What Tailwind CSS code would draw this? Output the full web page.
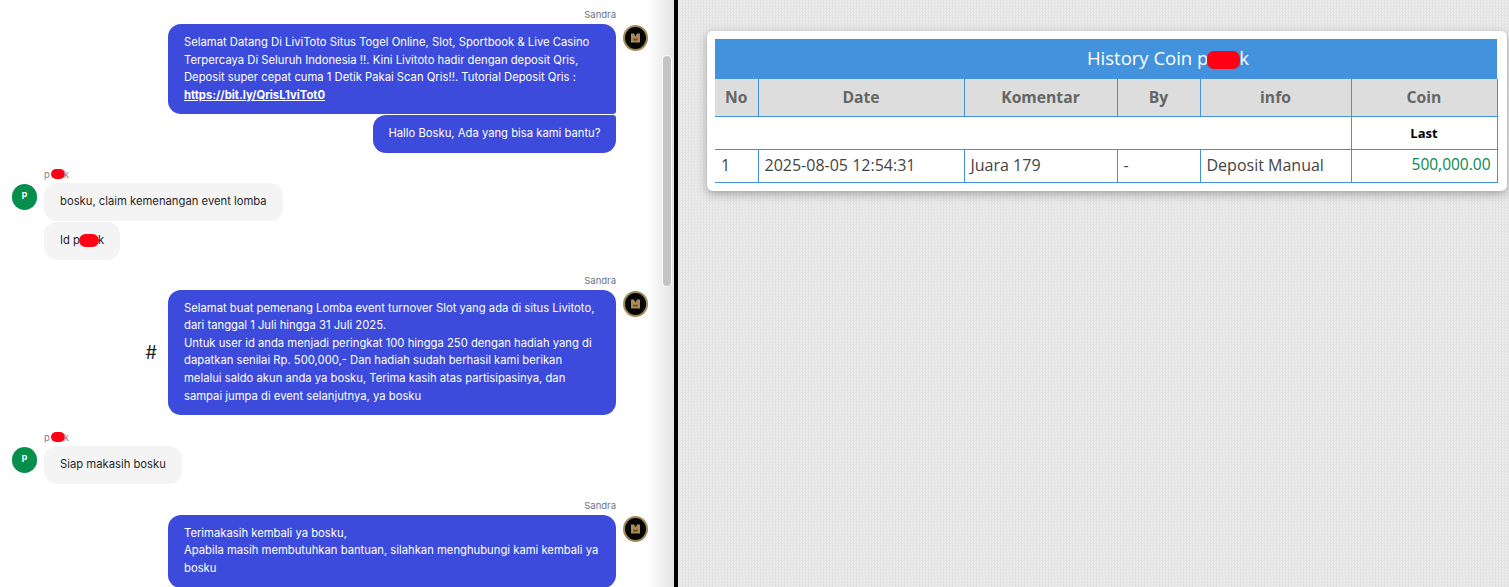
<!DOCTYPE html>
<html lang="id">
<head>
    <meta charset="UTF-8">
    <script src="https://cdn.jsdelivr.net/npm/@tailwindcss/browser@4"></script>
    <title>History Coin</title>
</head>
<body class="overflow-hidden">
    <div class="flex h-[587px] w-[1509px] overflow-hidden">
        <!-- chat -->
        <div class="relative h-full w-[674px] shrink-0 overflow-hidden bg-white font-['Inter',sans-serif] text-[11.25px] leading-[17.6px]">
            <div class="absolute inset-y-0 right-0 w-[26px] bg-gradient-to-r from-white to-[#e2e2e2]"></div>
            <div class="absolute right-[3px] top-[56px] h-[230px] w-[8px] rounded-full bg-[#c4c4c4] ring-1 ring-white/70"></div>

            <div class="relative flex flex-col pt-[10px] pl-[12px] pr-[26px]">
                <!-- agent -->
                <div class="flex flex-col">
                    <div class="pr-[32px] text-right text-[9.5px] leading-[10px] text-[#6b7280]">Sandra</div>
                    <div class="mt-[4px] flex items-start justify-end gap-[7px]">
                        <div class="flex flex-col items-end gap-px">
                            <div class="w-[448px] rounded-[13px] rounded-br-[3px] bg-[#3c4bdb] px-[16px] py-[10px] text-white">
                                Selamat Datang Di LiviToto Situs Togel Online, Slot, Sportbook &amp; Live Casino Terpercaya Di Seluruh Indonesia !!. Kini Livitoto hadir dengan deposit Qris, Deposit super cepat cuma 1 Detik Pakai Scan Qris!!. Tutorial Deposit Qris : <a class="font-bold underline">https://bit.ly/QrisL1viTot0</a>
                            </div>
                            <div class="rounded-[13px] rounded-tr-[3px] bg-[#3c4bdb] px-[15.5px] py-[10px] text-white">Hallo Bosku, Ada yang bisa kami bantu?</div>
                        </div>
                        <svg class="mt-px h-[26px] w-[25px] shrink-0" viewBox="0 0 25 26">
                            <ellipse cx="12.5" cy="13" rx="11.5" ry="12" fill="#050505" stroke="#a08a55" stroke-width="2"/>
                            <path d="M8 8.500h3l1.500 3 1.500-3h3v9h-9z" fill="#a98a58"/>
                            <path d="M10.500 13l2 1.500 2-1.500v2.500h-4z" fill="#5a4520"/>
                        </svg>
                    </div>
                </div>

                <!-- user -->
                <div class="mt-[16px] flex flex-col">
                    <div class="pl-[32px] text-[9.5px] leading-[10px] text-[#7b8087]">p<span class="mr-[-1px] ml-px inline-block h-[10px] w-[14px] rounded-full bg-[#ff0014] align-[-1px]"></span>k</div>
                    <div class="mt-[3px] flex items-start gap-[7px]">
                        <div class="mt-px flex h-[26px] w-[25px] shrink-0 items-center justify-center rounded-full bg-[#068f4c] text-[8.5px] font-bold text-white">P</div>
                        <div class="flex flex-col items-start gap-[1.5px]">
                            <div class="rounded-[13px] bg-[#f4f4f5] px-[16px] py-[10px] text-[#27272a]">bosku, claim kemenangan event lomba</div>
                            <div class="rounded-[13px] bg-[#f4f4f5] px-[16px] py-[10px] text-[#27272a]">Id p<span class="mx-[-1px] inline-block h-[13px] w-[20px] rounded-full bg-[#ff0014] align-[-3px]"></span>k</div>
                        </div>
                    </div>
                </div>

                <!-- agent -->
                <div class="mt-[16px] flex flex-col">
                    <div class="pr-[32px] text-right text-[9.5px] leading-[10px] text-[#6b7280]">Sandra</div>
                    <div class="mt-[4px] flex items-start justify-end gap-[7px]">
                        <div class="mr-[4px] self-center text-[18px] text-[#222]">#</div>
                        <div class="w-[448px] rounded-[13px] bg-[#3c4bdb] px-[16px] py-[10px] text-white">
                            Selamat buat pemenang Lomba event turnover Slot yang ada di situs Livitoto, dari tanggal 1 Juli hingga 31 Juli 2025.<br>
                            Untuk user id anda menjadi peringkat 100 hingga 250 dengan hadiah yang di dapatkan senilai Rp. 500,000,- Dan hadiah sudah berhasil kami berikan melalui saldo akun anda ya bosku, Terima kasih atas partisipasinya, dan sampai jumpa di event selanjutnya, ya bosku
                        </div>
                        <svg class="mt-px h-[26px] w-[25px] shrink-0" viewBox="0 0 25 26">
                            <ellipse cx="12.5" cy="13" rx="11.5" ry="12" fill="#050505" stroke="#a08a55" stroke-width="2"/>
                            <path d="M8 8.500h3l1.500 3 1.500-3h3v9h-9z" fill="#a98a58"/>
                            <path d="M10.500 13l2 1.500 2-1.500v2.500h-4z" fill="#5a4520"/>
                        </svg>
                    </div>
                </div>

                <!-- user -->
                <div class="mt-[17px] flex flex-col">
                    <div class="pl-[32px] text-[9.5px] leading-[10px] text-[#7b8087]">p<span class="mr-[-1px] ml-px inline-block h-[10px] w-[14px] rounded-full bg-[#ff0014] align-[-1px]"></span>k</div>
                    <div class="mt-[3px] flex items-start gap-[7px]">
                        <div class="mt-px flex h-[26px] w-[25px] shrink-0 items-center justify-center rounded-full bg-[#068f4c] text-[8.5px] font-bold text-white">P</div>
                        <div class="rounded-[13px] bg-[#f4f4f5] px-[16px] py-[10px] text-[#27272a]">Siap makasih bosku</div>
                    </div>
                </div>

                <!-- agent -->
                <div class="mt-[17px] flex flex-col">
                    <div class="pr-[32px] text-right text-[9.5px] leading-[10px] text-[#6b7280]">Sandra</div>
                    <div class="mt-[4px] flex items-start justify-end gap-[7px]">
                        <div class="w-[448px] rounded-[13px] bg-[#3c4bdb] px-[16px] py-[10px] text-white">
                            Terimakasih kembali ya bosku,<br>
                            Apabila masih membutuhkan bantuan, silahkan menghubungi kami kembali ya bosku
                        </div>
                        <svg class="mt-px h-[26px] w-[25px] shrink-0" viewBox="0 0 25 26">
                            <ellipse cx="12.5" cy="13" rx="11.5" ry="12" fill="#050505" stroke="#a08a55" stroke-width="2"/>
                            <path d="M8 8.500h3l1.500 3 1.500-3h3v9h-9z" fill="#a98a58"/>
                            <path d="M10.500 13l2 1.500 2-1.500v2.500h-4z" fill="#5a4520"/>
                        </svg>
                    </div>
                </div>
            </div>
        </div>

        <!-- divider -->
        <div class="h-full w-[4px] shrink-0 bg-black"></div>

        <!-- history -->
        <div class="h-full flex-1 bg-[#e7e7e7] bg-[repeating-conic-gradient(#e3e3e3_0%_25%,#ebebeb_0%_50%)] bg-[length:3px_3px] pt-[31px] pl-[29px] pr-[3px] font-['Open_Sans',sans-serif]">
            <div class="rounded-[6px] bg-white pt-[8px] pr-[9px] pb-[8px] pl-[8px] shadow-[0_3px_10px_rgba(0,0,0,0.3)]">
                <table class="w-[782px] table-fixed border-collapse text-[16px] text-[#444]">
                    <colgroup>
                        <col class="w-[43px]">
                        <col class="w-[206px]">
                        <col class="w-[153px]">
                        <col class="w-[83px]">
                        <col class="w-[151px]">
                        <col class="w-[146px]">
                    </colgroup>
                    <thead>
                        <tr>
                            <th colspan="6" class="h-[40px] bg-[#4292dd] pb-[2px] pl-[124px] text-center text-[18.5px] font-normal text-white">History Coin p<span class="mx-[-1px] inline-block h-[18px] w-[33px] rounded-[7px] bg-[#ff0014] align-[-4px]"></span>k</th>
                        </tr>
                        <tr class="h-[37px] border-b border-[#4292dd] bg-[#dddddd] text-[15.7px] font-bold text-[#666]">
                            <th class="border-r border-[#4292dd] pt-[2px]">No</th>
                            <th class="border-r border-[#4292dd] pt-[2px]">Date</th>
                            <th class="border-r border-[#4292dd] pt-[2px]">Komentar</th>
                            <th class="border-r border-[#4292dd] pt-[2px]">By</th>
                            <th class="border-r border-[#4292dd] pt-[2px]">info</th>
                            <th class="border-r border-[#4292dd] pt-[2px]">Coin</th>
                        </tr>
                    </thead>
                    <tbody>
                        <tr class="h-[33px] border-b border-[#4292dd]">
                            <td colspan="5" class="border-r border-[#4292dd]"></td>
                            <td class="border-r border-[#4292dd] pt-[3px] text-center text-[13px] font-bold text-black">Last</td>
                        </tr>
                        <tr class="h-[33px] border-b border-[#4292dd]">
                            <td class="border-r border-[#4292dd] px-[6px] pb-px">1</td>
                            <td class="border-r border-[#4292dd] px-[6px] pb-px">2025-08-05 12:54:31</td>
                            <td class="border-r border-[#4292dd] px-[6px] pb-px">Juara 179</td>
                            <td class="border-r border-[#4292dd] px-[6px] pb-px">-</td>
                            <td class="border-r border-[#4292dd] px-[6px] pb-px">Deposit Manual</td>
                            <td class="border-r border-[#4292dd] px-[6px] pb-px text-right text-[15.5px] text-[#068a50]">500,000.00</td>
                        </tr>
                    </tbody>
                </table>
            </div>
        </div>
    </div>
</body>
</html>
